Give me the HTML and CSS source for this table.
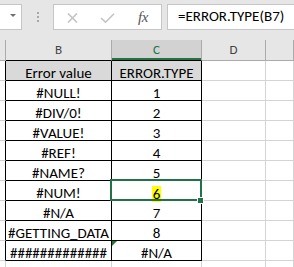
FILE: index.html
```html
<!DOCTYPE html>
<html lang="en">
<head>
<meta charset="utf-8">
<title>ERROR.TYPE</title>
<link rel="stylesheet" href="styles.css">
</head>
<body>
<div class="formula-bar">
  <div class="name-box"><span class="caret"></span></div>
  <div class="grip"><i></i><i></i><i></i></div>
  <div class="fx-box">
    <svg class="ico-cancel" width="11" height="10" viewBox="0 0 11 10"><path d="M1 0.5 L10 9.5 M10 0.5 L1 9.5" stroke="#c3c3c3" stroke-width="1.6" fill="none"/></svg>
    <svg class="ico-enter" width="15" height="10" viewBox="0 0 15 10"><path d="M1 5 L5.5 9.2 L14 0.8" stroke="#c3c3c3" stroke-width="1.6" fill="none"/></svg>
    <span class="fx">fx</span>
  </div>
  <div class="formula-input">=ERROR.TYPE(B7)</div>
</div>

<div class="sheet">
  <div class="col-head"></div>
  <div class="col-head table-top">B</div>
  <div class="col-head table-top active">C</div>
  <div class="col-head">D</div>
  <div class="col-head"></div>

  <div class="cell edge"></div><div class="cell tc th">Error value</div><div class="cell tc th">ERROR.TYPE</div><div class="cell"></div><div class="cell"></div>
  <div class="cell edge"></div><div class="cell tc">#NULL!</div><div class="cell tc">1</div><div class="cell"></div><div class="cell"></div>
  <div class="cell edge"></div><div class="cell tc">#DIV/0!</div><div class="cell tc">2</div><div class="cell"></div><div class="cell"></div>
  <div class="cell edge"></div><div class="cell tc">#VALUE!</div><div class="cell tc">3</div><div class="cell"></div><div class="cell"></div>
  <div class="cell edge"></div><div class="cell tc">#REF!</div><div class="cell tc">4</div><div class="cell"></div><div class="cell"></div>
  <div class="cell edge"></div><div class="cell tc">#NAME?</div><div class="cell tc">5</div><div class="cell"></div><div class="cell"></div>
  <div class="cell edge"></div><div class="cell tc">#NUM!</div><div class="cell tc"><span class="hl">6</span></div><div class="cell"></div><div class="cell"></div>
  <div class="cell edge"></div><div class="cell tc">#N/A</div><div class="cell tc">7</div><div class="cell"></div><div class="cell"></div>
  <div class="cell edge"></div><div class="cell tc">#GETTING_DATA</div><div class="cell tc">8</div><div class="cell"></div><div class="cell"></div>
  <div class="cell edge"></div><div class="cell tc">#############</div><div class="cell tc flagged">#N/A</div><div class="cell"></div><div class="cell"></div>
  <div class="cell open"></div><div class="cell open"></div><div class="cell open"></div><div class="cell open"></div><div class="cell open"></div>

  <div class="selection"></div>
  <div class="fill-handle"></div>
</div>
</body>
</html>
```
FILE: styles.css
```css
html, body {
  margin: 0;
  padding: 0;
  background: #fff;
  overflow: hidden;
}

body {
  width: 294px;
  height: 267px;
  font-family: "Carlito", "Liberation Sans", sans-serif;
  font-size: 15px;
  color: #000;
}

/* ---- formula bar ---- */
.formula-bar {
  height: 40px;
  box-sizing: border-box;
  padding-top: 4px;
  background: #e6e6e6;
  display: flex;
  align-items: flex-start;
}

.name-box {
  margin-left: -10px;
  width: 32px;
  height: 26px;
  box-sizing: border-box;
  border: 1px solid #c6c6c6;
  background: #fff;
  padding: 9px 0 0 19px;
  flex: none;
}

.caret {
  display: block;
  width: 0;
  height: 0;
  border-left: 3px solid transparent;
  border-right: 3px solid transparent;
  border-top: 3px solid #6f6f6f;
}

.grip {
  margin: 8px 0 0 15px;
  width: 2px;
  display: flex;
  flex-direction: column;
  gap: 2px;
  flex: none;
}

.grip i {
  display: block;
  width: 2px;
  height: 2px;
  background: #a8a8a8;
}

.fx-box {
  margin-left: 14px;
  width: 109px;
  height: 26px;
  box-sizing: border-box;
  border: 1px solid #c6c6c6;
  background: #fff;
  display: flex;
  align-items: flex-start;
  padding-left: 13px;
  flex: none;
}

.ico-cancel { margin-top: 8px; flex: none; }
.ico-enter { margin: 8px 0 0 22px; flex: none; }

.fx {
  margin-left: 23px;
  font-family: "Liberation Serif", serif;
  font-style: italic;
  font-size: 15px;
  line-height: 24px;
  color: #555;
  letter-spacing: -0.5px;
}

/* input runs on past the window's right edge, so no right border */
.formula-input {
  margin-left: 5px;
  flex: 1;
  min-width: 0;
  height: 26px;
  box-sizing: border-box;
  border: 1px solid #c6c6c6;
  border-right: none;
  background: #fff;
  padding-left: 10px;
  line-height: 23px;
  white-space: nowrap;
  overflow: hidden;
}

/* ---- worksheet grid ---- */
.sheet {
  position: relative;
  display: grid;
  grid-template-columns: 6px 106px 90px 64px 1fr;
  grid-template-rows: 21px repeat(10, 20px) 6px;
}

.col-head {
  box-sizing: border-box;
  background: #e6e6e6;
  border-right: 1px solid #ababab;
  border-bottom: 1px solid #ababab;
  font-size: 13px;
  line-height: 20px;
  text-align: center;
  color: #444;
}

.col-head:last-of-type { border-right: none; }

.col-head.table-top {
  border-bottom-color: #000;
}

.col-head.active {
  background: #d2d2d2;
  color: #217346;
  box-shadow: inset 0 -2px 0 #217346;
}

.cell {
  box-sizing: border-box;
  border-right: 1px solid #d4d4d4;
  border-bottom: 1px solid #d4d4d4;
  padding-top: 5px;
  line-height: 14px;
  white-space: nowrap;
  position: relative;
}

/* the row cut off by the window bottom */
.cell.open {
  border-bottom: none;
  padding-top: 0;
}

.cell.edge {
  border-right-color: #000;
}

.cell.tc {
  text-align: center;
  border-right-color: #000;
  border-bottom-color: #000;
}

.cell.th {
  background: #d9d9d9;
}

.hl {
  display: inline-block;
  background: #ffff00;
  line-height: 16px;
  padding: 0 1px;
}

/* green error-check marker in the cell's corner */
.cell.flagged::before {
  content: "";
  position: absolute;
  left: 0;
  top: 0;
  border-top: 5px solid #1e7b3a;
  border-right: 5px solid transparent;
}

/* active cell outline */
.selection {
  position: absolute;
  left: 110px;
  top: 139px;
  width: 92px;
  height: 22px;
  box-sizing: border-box;
  border: 2px solid #217346;
}

.fill-handle {
  position: absolute;
  left: 197px;
  top: 157px;
  width: 7px;
  height: 7px;
  box-sizing: border-box;
  border: 1px solid #fff;
  background: #217346;
}
```
